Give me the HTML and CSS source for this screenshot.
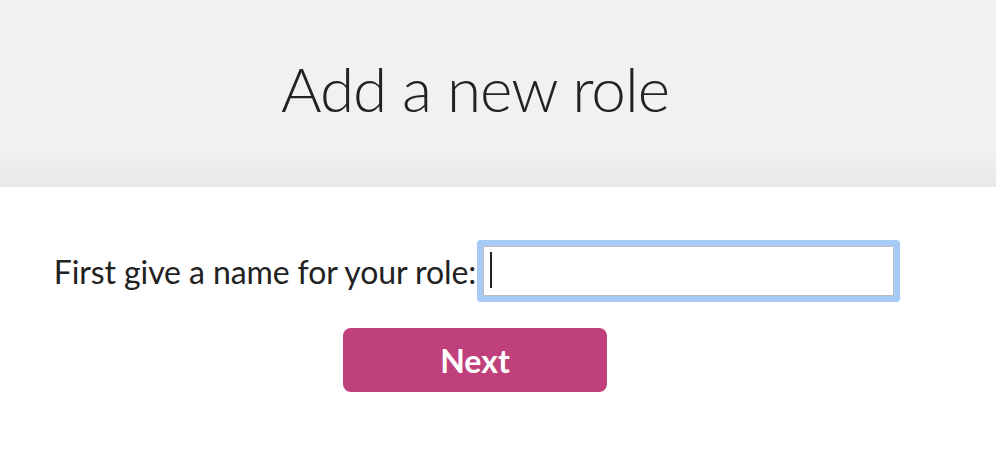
FILE: index.html
```html
<!DOCTYPE html>
<html>
<head>
<meta charset="utf-8">
<link rel="stylesheet" href="styles.css">
</head>
<body>
<header class="header">
  <h1 class="title">Add a new role</h1>
</header>
<main class="content">
  <form class="role-form">
    <div class="field-row">
      <label class="label" for="role">First give a name for your role:</label>
      <span class="input-wrap">
        <input class="input" id="role" type="text">
        <span class="caret"></span>
      </span>
    </div>
    <button class="next" type="button">Next</button>
  </form>
</main>
</body>
</html>
```

FILE: styles.css
```css
html, body {
  margin: 0;
  padding: 0;
  background: #ffffff;
  font-family: Lato, "Open Sans", sans-serif;
  color: #222222;
}

.header {
  box-sizing: border-box;
  height: 187px;
  width: 100%;
  background: linear-gradient(to bottom, #f2f1ef 0px, #f2f1ef 150px, #e9e8e6 187px);
  display: flex;
  justify-content: center;
  align-items: center;
  padding-right: 46px;
  padding-bottom: 12px;
}

.title {
  margin: 0;
  font-weight: 300;
  font-size: 62px;
  line-height: 1;
  color: #222222;
  letter-spacing: -1px;
}

.content {
  width: 950px;
}

.role-form {
  display: flex;
  flex-direction: column;
  align-items: center;
  padding-top: 59px;
}

.field-row {
  display: flex;
  align-items: center;
  gap: 7px;
  padding-right: 2px;
}

.label {
  font-size: 32px;
  font-weight: 400;
  color: #222222;
  letter-spacing: -0.1px;
}

.input-wrap {
  position: relative;
  display: block;
}

.input {
  display: block;
  box-sizing: border-box;
  width: 411px;
  height: 50px;
  border: 1px solid #bdbdbd;
  border-radius: 1px;
  box-shadow: 0 0 0 6px #a6cbf7;
  outline: none;
  background: #fff;
  font-family: Lato, sans-serif;
  font-size: 24px;
  padding: 0 8px;
}

.caret {
  position: absolute;
  left: 7px;
  top: 6px;
  width: 2px;
  height: 36px;
  background: #222;
}

.next {
  margin-top: 32px;
  width: 264px;
  height: 64px;
  border: none;
  border-radius: 8px;
  background: #c0407b;
  color: #ffffff;
  font-family: Lato, sans-serif;
  font-weight: 700;
  font-size: 32px;
  padding: 0;
}
```
